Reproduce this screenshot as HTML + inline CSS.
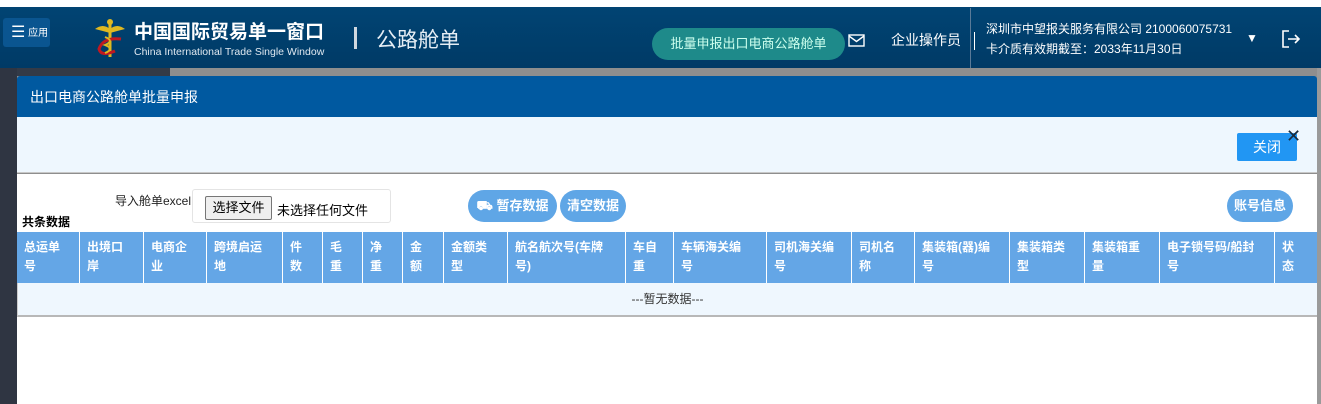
<!DOCTYPE html>
<html><head><meta charset="utf-8"><style>
*{margin:0;padding:0;box-sizing:border-box}
body{width:1321px;height:404px;overflow:hidden;background:#fff;font-family:"Liberation Sans","Noto Sans CJK SC",sans-serif;position:relative}
.abs{position:absolute}
.hdr{left:0;top:7px;width:1321px;height:61px;background:linear-gradient(#014473,#003a66)}
.th{position:absolute;top:232px;height:51px;background:#64a6e6;color:#fff;font-weight:bold;font-size:12px;line-height:19px;padding:6px 7px;border-right:1px solid #fff}
</style></head><body>
<div class="abs" style="left:0;top:0;width:1321px;height:7px;background:#fff"></div>
<div class="abs hdr"></div>
<div class="abs" style="left:3px;top:18px;width:47px;height:29px;background:#0a5590;border-radius:3px;color:#fff;font-size:10px;line-height:29px;padding-left:8px"><span style="font-size:16px;vertical-align:-1px">☰</span> 应用</div>
<svg class="abs" style="left:93px;top:17px" width="34" height="43" viewBox="0 0 34 43"><path d="M17 4 L17 40" stroke="#e0b820" stroke-width="3"/><path d="M2 12 Q10 6 17 12 Q24 6 32 12 Q24 14 17 16 Q10 14 2 12Z" fill="#e0b820"/><circle cx="17" cy="5" r="3" fill="#e0b820"/><path d="M28 22 Q10 20 6 32 Q8 40 22 34" stroke="#c01820" stroke-width="3" fill="none"/><path d="M12 20 Q22 24 12 28 Q22 32 12 36" stroke="#e0b820" stroke-width="2" fill="none"/></svg>
<div class="abs" style="left:134px;top:21px;color:#fff;font-size:19px;font-weight:bold;line-height:24px">中国国际贸易单一窗口</div>
<div class="abs" style="left:134px;top:46px;color:#dfe8f0;font-size:10.5px">China International Trade Single Window</div>
<div class="abs" style="left:354px;top:27px;width:3px;height:22px;background:#cfd8e0"></div>
<div class="abs" style="left:376px;top:24px;color:#e6eef5;font-size:21px">公路舱单</div>
<div class="abs" style="left:652px;top:28px;width:193px;height:32px;border-radius:16px;background:#1e8a8a;color:#cfe;font-size:13px;line-height:32px;text-align:center">批量申报出口电商公路舱单</div>
<svg class="abs" style="left:848px;top:34px" width="18" height="14"><rect x="1" y="1" width="15" height="11" fill="none" stroke="#fff" stroke-width="1.4"/><path d="M1 2 L8.5 7.5 L16 2" fill="none" stroke="#fff" stroke-width="1.4"/></svg>
<div class="abs" style="left:891px;top:30px;color:#fff;font-size:14px">企业操作员</div>
<div class="abs" style="left:970px;top:8px;width:1px;height:60px;background:#5a7a98"></div>
<div class="abs" style="left:974px;top:32px;width:1px;height:18px;background:#fff"></div>
<div class="abs" style="left:986px;top:20px;color:#fff;font-size:12px">深圳市中望报关服务有限公司 2100060075731</div>
<div class="abs" style="left:986px;top:40px;color:#fff;font-size:12px">卡介质有效期截至：2033年11月30日</div>
<div class="abs" style="left:1246px;top:31px;color:#fff;font-size:12px">▼</div>
<svg class="abs" style="left:1281px;top:29px" width="20" height="20"><path d="M8 2 H2 V18 H8" fill="none" stroke="#fff" stroke-width="1.6"/><path d="M7 10 H18 M14 6 L18 10 L14 14" fill="none" stroke="#fff" stroke-width="1.6"/></svg>
<div class="abs" style="left:0;top:68px;width:1321px;height:336px;background:#8e8e8e"></div>
<div class="abs" style="left:0;top:68px;width:17px;height:336px;background:#2f3542"></div>
<div class="abs" style="left:17px;top:68px;width:153px;height:8px;background:#333a47"></div>
<div class="abs" style="left:1317px;top:68px;width:4px;height:336px;background:#9a9a9a"></div>
<div class="abs" style="left:17px;top:76px;width:1300px;height:41px;background:#0059a0;border-radius:3px 3px 0 0;color:#fff;font-size:14px;line-height:43px;padding-left:13px">出口电商公路舱单批量申报</div>
<div class="abs" style="left:17px;top:117px;width:1300px;height:56px;background:#eef7fe;border-bottom:1px solid #c8c8c8"></div>
<div class="abs" style="left:1237px;top:133px;width:60px;height:28px;background:#2196f3;border-radius:2px;color:#fff;font-size:14px;line-height:28px;text-align:center">关闭</div>
<div class="abs" style="left:1286px;top:127px;color:#1a2a3a;font-size:18px;line-height:18px">✕</div>
<div class="abs" style="left:17px;top:174px;width:1300px;height:230px;background:#fff"></div>
<div class="abs" style="left:115px;top:192px;font-size:12px;color:#222">导入舱单excel</div>
<div class="abs" style="left:192px;top:189px;width:199px;height:34px;border:1px solid #e4e4e4;border-radius:3px"></div>
<div class="abs" style="left:205px;top:196px;width:67px;height:24px;background:#efefef;border:1px solid #767676;border-radius:2px;font-size:13px;line-height:22px;text-align:center;color:#000">选择文件</div>
<div class="abs" style="left:277px;top:200px;font-size:13px;color:#000">未选择任何文件</div>
<div class="abs" style="left:22px;top:213px;font-size:12px;font-weight:bold;color:#000">共条数据</div>
<div class="abs" style="left:468px;top:190px;width:89px;height:32px;border-radius:16px;background:#5fa6e6;color:#fff;font-weight:bold;font-size:13px;line-height:32px;text-align:center">⛟ 暂存数据</div>
<div class="abs" style="left:560px;top:190px;width:66px;height:32px;border-radius:16px;background:#5fa6e6;color:#fff;font-weight:bold;font-size:13px;line-height:32px;text-align:center">清空数据</div>
<div class="abs" style="left:1227px;top:190px;width:66px;height:32px;border-radius:16px;background:#5fa6e6;color:#fff;font-weight:bold;font-size:13px;line-height:32px;text-align:center">账号信息</div>
<div class="th" style="left:17px;width:63px">总运单<br>号</div>
<div class="th" style="left:80px;width:64px">出境口<br>岸</div>
<div class="th" style="left:144px;width:63px">电商企<br>业</div>
<div class="th" style="left:207px;width:76px">跨境启运<br>地</div>
<div class="th" style="left:283px;width:40px">件<br>数</div>
<div class="th" style="left:323px;width:40px">毛<br>重</div>
<div class="th" style="left:363px;width:40px">净<br>重</div>
<div class="th" style="left:403px;width:41px">金<br>额</div>
<div class="th" style="left:444px;width:64px">金额类<br>型</div>
<div class="th" style="left:508px;width:118px">航名航次号(车牌<br>号)</div>
<div class="th" style="left:626px;width:48px">车自<br>重</div>
<div class="th" style="left:674px;width:93px">车辆海关编<br>号</div>
<div class="th" style="left:767px;width:85px">司机海关编<br>号</div>
<div class="th" style="left:852px;width:63px">司机名<br>称</div>
<div class="th" style="left:915px;width:95px">集装箱(器)编<br>号</div>
<div class="th" style="left:1010px;width:75px">集装箱类<br>型</div>
<div class="th" style="left:1085px;width:75px">集装箱重<br>量</div>
<div class="th" style="left:1160px;width:115px">电子锁号码/船封<br>号</div>
<div class="th" style="left:1275px;width:42px;border-right:none">状<br>态</div>
<div class="abs" style="left:17px;top:283px;width:1300px;height:34px;background:#eff7fe;border-bottom:2px solid #b8b8b8;border-left:1px solid #ccc;font-size:12px;line-height:32px;text-align:center;color:#333">---暂无数据---</div>
</body></html>
